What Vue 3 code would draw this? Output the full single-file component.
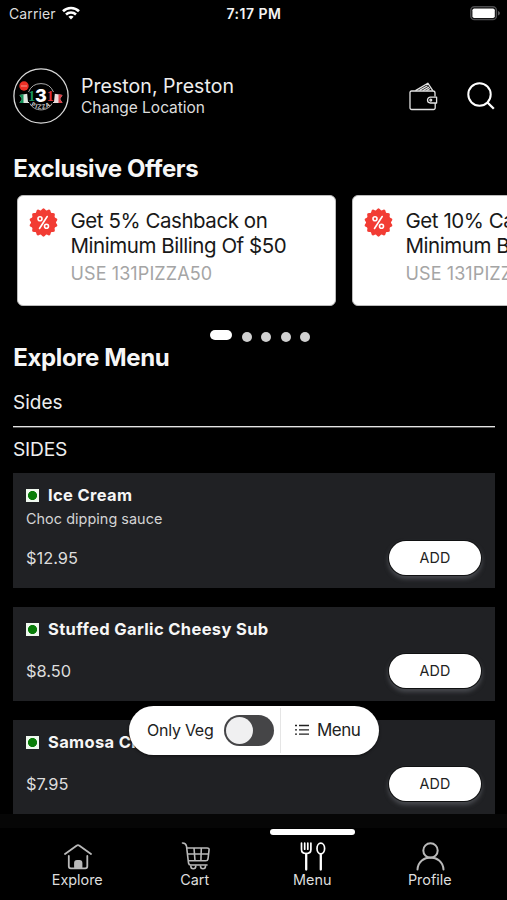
<script setup>
import { ref } from 'vue'

const offers = [
  { line1: 'Get 5% Cashback on', line2: 'Minimum Billing Of $50', code: 'USE 131PIZZA50' },
  { line1: 'Get 10% Cashback on', line2: 'Minimum Billing Of $100', code: 'USE 131PIZZA100' },
]

const items = [
  { name: 'Ice Cream', note: 'Choc dipping sauce', price: '$12.95' },
  { name: 'Stuffed Garlic Cheesy Sub', price: '$8.50' },
  { name: 'Samosa Chaat', price: '$7.95' },
]

const onlyVeg = ref(false)
const active = ref('Menu')

// Scalloped outline of the discount badge
const badge = Array.from({ length: 96 }, (_, i) => {
  const a = (i / 96) * Math.PI * 2
  const r = 13.3 + 0.9 * Math.cos(a * 14)
  return `${(14.5 + r * Math.sin(a)).toFixed(2)},${(14.5 - r * Math.cos(a)).toFixed(2)}`
}).join(' ')
</script>

<template>
  <div class="screen">
    <div class="status">
      <div class="carrier">
        <span>Carrier</span>
        <svg width="18" height="14" viewBox="0 0 18 14" fill="none" stroke="#fff" stroke-width="2.6">
          <path d="M1 5.2C5.4 .9 12.6 .9 17 5.2" />
          <path d="M4 8.5c2.8-2.6 7.2-2.6 10 0" />
          <path d="M6.4 10.8c1.5-1.4 3.7-1.4 5.2 0L9 13.6z" fill="#fff" stroke="none" />
        </svg>
      </div>
      <div class="time">7:17 PM</div>
      <div class="battery">
        <svg width="31" height="15" viewBox="0 0 31 15">
          <rect x=".8" y=".8" width="25.6" height="12.8" rx="3.6" fill="#000" stroke="#4d4d4f" stroke-width="1.5" />
          <rect x="2.4" y="2.4" width="22.4" height="9.600" rx="1.8" fill="#fff" />
          <path d="M28 5c2.6.9 2.6 3.600 0 4.500z" fill="#5a5a5c" />
        </svg>
      </div>
    </div>

    <header class="header">
      <svg class="logo" width="56" height="56" viewBox="0 0 56 56">
        <circle cx="28" cy="28" r="27.100" fill="#000" stroke="#d8d8d8" stroke-width="1.300" />
        <path d="M15.500 24a13.500 13.500 0 0 1 25 0M17 35.500c4 8.500 18 8.500 22 0" fill="none" stroke="#aaa" stroke-width="1" />
        <path d="M6.500 27l9.500-1.500v9.500H6.500l2.500-4z" fill="#dfe6e0" />
        <path d="M6.500 27l4-.7v8.700h-4l2.500-4z" fill="#16945a" />
        <path d="M49.500 27l-9.500-1.500v9.500h9.500l-2.500-4z" fill="#e9dddd" />
        <path d="M45.500 26.300l4 .7-2.500 4 2.500 4h-4z" fill="#dd3f46" />
        <path d="M14 24h9v10h-8zM33 24h9l-1 10h-8z" fill="#000" />
        <circle cx="11" cy="18" r="4.700" fill="#ec3026" />
        <path d="M8 18h6" stroke="#f58a80" stroke-width="1.200" />
        <text x="18.700" y="32.500" class="lg one" fill="#17935a">1</text>
        <text x="28" y="34" class="lg three" fill="#fff">3</text>
        <text x="37.300" y="32.500" class="lg one" fill="#de3038">1</text>
        <path id="arc" d="M17 37q11 7.500 22 0" fill="none" />
        <text class="lg word" fill="#c9c9c9"><textPath href="#arc" startOffset="50%">PIZZA</textPath></text>
      </svg>
      <div class="place">
        <div class="city">Preston, Preston</div>
        <div class="change">Change Location</div>
      </div>
      <svg class="wallet" width="29" height="29" viewBox="0 0 29 29" fill="none" stroke="#e4e4e4" stroke-width="1.300" stroke-linejoin="round">
        <path d="M26 14.500V11a2 2 0 0 0-2-2H2.500A1.500 1.500 0 0 0 1 10.500v15.300A1.700 1.700 0 0 0 2.700 27.500H24.500a1.700 1.700 0 0 0 1.700-1.700V21" />
        <path d="M27.600 15.200h-6.200a2.900 2.900 0 0 0 0 5.800h6.200z" />
        <circle cx="21.800" cy="18.100" r=".9" />
        <path d="M6.500 8.600L18.800 1.200 23.800 8.600M10.500 8.400l8-4.700M14 8.500l6-3.400M17.500 8.500l3.600-2" />
      </svg>
      <svg class="search" width="28" height="28" viewBox="0 0 28 28" fill="none" stroke="#fff" stroke-width="2">
        <circle cx="12.500" cy="12.500" r="11.200" />
        <path d="M20.500 20.500l6.300 6.300" stroke-width="2.300" />
      </svg>
    </header>

    <h2 class="heading offers-title">Exclusive Offers</h2>
    <div class="offers">
      <div v-for="o in offers" :key="o.code" class="offer">
        <svg class="badge" width="29" height="29" viewBox="0 0 29 29">
          <polygon :points="badge" fill="#f23c34" />
          <g fill="none" stroke="#fff" stroke-width="1.600">
            <circle cx="11" cy="10.800" r="2" />
            <circle cx="17.500" cy="18.300" r="2" />
            <path d="M18.200 8.500L10.500 20.500" stroke-linecap="round" />
          </g>
        </svg>
        <div class="offer-copy">
          <div class="offer-line">{{ o.line1 }}</div>
          <div class="offer-line">{{ o.line2 }}</div>
          <div class="code">{{ o.code }}</div>
        </div>
      </div>
    </div>
    <div class="dots">
      <i class="on"></i><i></i><i></i><i></i><i></i>
    </div>

    <h2 class="heading menu-title">Explore Menu</h2>
    <div class="tab">Sides</div>
    <div class="category">SIDES</div>

    <main class="list">
      <article v-for="item in items" :key="item.name" class="item">
        <div class="name-row"><span class="veg"></span><span class="name">{{ item.name }}</span></div>
        <div v-if="item.note" class="note">{{ item.note }}</div>
        <div class="buy">
          <span class="price">{{ item.price }}</span>
          <button class="add">ADD</button>
        </div>
      </article>
    </main>

    <div class="floating">
      <span class="veg-label">Only Veg</span>
      <button class="switch" :class="{ checked: onlyVeg }" aria-label="Only Veg" @click="onlyVeg = !onlyVeg"><i></i></button>
      <div class="menu-part">
        <svg width="14" height="12" viewBox="0 0 14 12" stroke="#222" stroke-width="1.300">
          <path d="M0 1.500h2M4 1.500h10M0 5.800h2M4 5.800h10M0 10.200h2M4 10.200h10" />
        </svg>
        <span class="menu-label">Menu</span>
      </div>
    </div>

    <nav class="nav">
      <a class="nav-item" :class="{ active: active === 'Explore' }" @click="active = 'Explore'">
        <svg width="30" height="30" viewBox="0 0 30 30" fill="none" stroke="#b9b9b9" stroke-width="1.800" stroke-linecap="round" stroke-linejoin="round">
          <path d="M3 13L14.500 4.700Q16 3.700 17.500 4.700L29 13" />
          <path d="M6.800 15v10.300a2 2 0 0 0 2 2h14.500a2 2 0 0 0 2-2V15" />
          <path d="M13 26.500v-4.500a2 2 0 0 1 2-2h2.500a2 2 0 0 1 2 2v4.500z" fill="#b9b9b9" />
        </svg>
        <span>Explore</span>
      </a>
      <a class="nav-item" :class="{ active: active === 'Cart' }" @click="active = 'Cart'">
        <svg width="30" height="30" viewBox="0 0 30 30" fill="none" stroke="#b9b9b9" stroke-width="1.600" stroke-linecap="round" stroke-linejoin="round">
          <path d="M2.500 2c2.800 0 3.600.8 4 3.200L8.500 22q.4 2 2 2h16.500" />
          <path d="M7 7h20q2.500 0 2 2.300l-1 8.700q-.4 1.800-2.200 1.800H9M8 13h20M14 7l1 12.800M21.300 7l-.4 12.800" />
          <path d="M10.800 25a2.500 2.700 0 1 0 5 0M20.500 25a2.500 2.700 0 1 0 5 0" />
        </svg>
        <span>Cart</span>
      </a>
      <a class="nav-item" :class="{ active: active === 'Menu' }" @click="active = 'Menu'">
        <svg width="30" height="30" viewBox="0 0 30 30" fill="none" stroke="#fff" stroke-width="1.700" stroke-linecap="round">
          <path d="M4.500 2.200v6.300q0 4 4.700 4t4.700-4V2.200M7.700 2.200v6M10.800 2.200v6" />
          <path d="M9.200 13v15.500" stroke-width="2.300" />
          <ellipse cx="23.800" cy="7.500" rx="3.800" ry="5.300" />
          <path d="M23.800 13.500v15" stroke-width="2.300" />
        </svg>
        <span>Menu</span>
      </a>
      <a class="nav-item" :class="{ active: active === 'Profile' }" @click="active = 'Profile'">
        <svg width="30" height="30" viewBox="0 0 30 30" fill="none" stroke="#b9b9b9" stroke-width="2" stroke-linecap="round">
          <circle cx="15.500" cy="9.500" r="7.200" />
          <path d="M2.500 28.500C3.500 12.500 27.500 12.500 28.500 28.500" />
        </svg>
        <span>Profile</span>
      </a>
    </nav>
  </div>
</template>

<style>
body { background: #000; margin: 0; }
</style>

<style scoped>
.screen { position: relative; box-sizing: border-box; width: 507px; height: 900px; overflow: hidden; background: #000; color: #eee; font-family: Inter, "Liberation Sans", sans-serif; display: flex; flex-direction: column; white-space: nowrap; }
svg { display: block; flex: none; }
button { border: 0; padding: 0; font-family: inherit; }

.status { display: grid; grid-template-columns: 1fr auto 1fr; align-items: center; height: 28px; padding: 0 6px 0 9px; flex: none; }
.carrier { display: flex; align-items: center; gap: 6px; font-size: 14px; letter-spacing: .1px; color: #ddd; margin-top: -1px; }
.carrier svg { margin-top: -1px; }
.time { font-size: 14px; letter-spacing: .5px; font-weight: 600; color: #f4f4f4; margin: -1px 0 0 -2px; }
.battery { display: flex; justify-content: flex-end; margin-top: -1px; }

.header { display: flex; align-items: center; height: 56px; margin-top: 40px; padding: 0 12px 0 13px; flex: none; }
.lg { font-family: "Liberation Serif", serif; font-weight: 700; text-anchor: middle; }
.one { font-size: 14px; }
.three { font-family: Inter, sans-serif; font-weight: 800; font-size: 18px; }
.word { font-family: Inter, sans-serif; font-size: 6px; letter-spacing: .7px; }
.place { margin-left: 12px; flex: 1; }
.city { font-size: 19.500px; line-height: 24px; letter-spacing: .05px; margin-top: 0; }
.change { font-size: 15.500px; line-height: 20px; letter-spacing: -.02px; color: #ddd; }
.wallet { margin-right: 29.500px; }

.heading { margin: 0; font-size: 24px; line-height: 30px; font-weight: 700; letter-spacing: -.38px; color: #f6f6f6; padding-left: 13.300px; flex: none; }
.offers-title { margin-top: 30px; }
.offers { display: flex; gap: 16px; margin: 11px 0 0 17px; flex: none; }
.offer { box-sizing: border-box; display: flex; flex: none; gap: 12px; width: 319px; height: 111px; padding: 13px; background: #fff; border: 1px solid #bbb; border-radius: 6px; }
.badge { margin: -1px 0 0 -2px; }
.offer-copy { padding-left: .5px; }
.offer-line { font-size: 20.500px; line-height: 24.800px; letter-spacing: -.45px; color: #181818; }
.code { font-size: 18px; line-height: 29px; letter-spacing: .1px; color: #a5a5a5; }
.dots { display: flex; align-items: center; gap: 9.600px; height: 10px; margin: 25px 0 0 210px; flex: none; }
.dots i { width: 10px; height: 10px; margin-top: 2px; border-radius: 5px; background: #d0d0d0; }
.dots .on { width: 22px; margin-top: -2px; background: #fff; }

.menu-title { margin-top: 2px; }
.tab { margin: 15px 12px 0 13px; box-sizing: border-box; height: 39px; line-height: 30px; font-size: 19px; border-bottom: 1px solid #e4e4e4; box-shadow: 0 1px 0 #555; flex: none; }
.category { margin: 8px 0 0 13px; height: 38px; line-height: 28px; font-size: 19.200px; letter-spacing: -.2px; flex: none; }
.list { display: flex; flex-direction: column; gap: 19px; padding: 0 12px 0 13px; }
.item { background: #202124; padding: 12px 14px 13px 13px; }
.name-row { display: flex; align-items: center; height: 21px; gap: 9px; }
.veg { box-sizing: border-box; width: 13px; height: 13px; background: radial-gradient(circle, #087d08 0 4.200px, #eff8ef 4.900px); }
.name { font-size: 16.500px; font-weight: 700; letter-spacing: .36px; margin-top: -1px; color: #f6f6f6; }
.note { font-size: 14.400px; line-height: 26px; height: 21px; letter-spacing: .05px; color: #d4d4d4; }
.buy { display: flex; align-items: center; justify-content: space-between; height: 34px; margin-top: 14px; }
.price { font-size: 16.400px; margin-top: -1px; color: #ddd; }
.add { width: 92px; height: 34px; border-radius: 17px; background: #fff; color: #222; font-size: 14.300px; letter-spacing: .2px; padding-bottom: 1px; box-shadow: 0 0 0 1px #101112, 0 3px 4px 1px #484a4f; }

.floating { position: absolute; left: 129px; top: 706px; width: 250px; height: 49px; border-radius: 25px; background: #fff; display: flex; align-items: center; color: #222; box-shadow: 0 1px 3px #0008; }
.veg-label { width: 77px; padding-left: 18px; font-size: 16px; letter-spacing: -.25px; margin-top: -1px; }
.switch { width: 50px; height: 31px; border-radius: 16px; background: #454547; display: flex; align-items: center; padding: 0 2px; }
.switch i { width: 27px; height: 27px; border-radius: 50%; background: #f0f0f1; }
.switch.checked { justify-content: flex-end; background: #087d08; }
.menu-part { display: flex; align-items: center; gap: 8px; height: 45px; margin-left: 6px; padding-left: 14px; border-left: 1px solid #e5e5e5; }
.menu-part svg { margin-top: -1px; }
.menu-label { font-size: 17px; letter-spacing: -.5px; margin-top: -1px; }

.nav { position: absolute; left: 0; right: 0; bottom: 0; height: 72px; display: grid; grid-template-columns: repeat(4, 117.500px); padding-left: 18.500px; background: #000; box-shadow: 0 -14px 0 #060606; }
.nav-item { position: relative; display: flex; flex-direction: column; align-items: center; padding-top: 12.500px; font-size: 14.400px; line-height: 20px; color: #ddd; cursor: pointer; }
.nav-item svg { margin-bottom: -.5px; }
.nav-item.active::before { content: ""; position: absolute; top: 1px; width: 85px; height: 6px; border-radius: 3px; background: #fff; }
</style>
